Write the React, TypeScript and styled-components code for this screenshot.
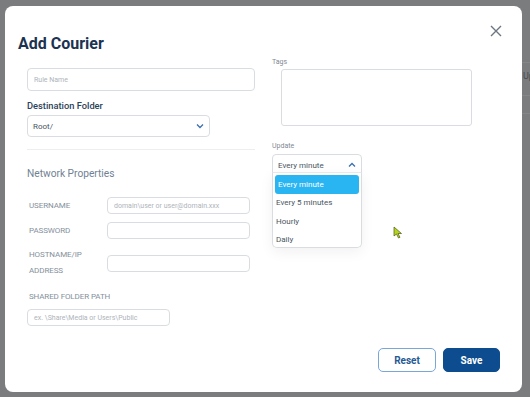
import React from "react";
import styled, { createGlobalStyle } from "styled-components";

const Global = createGlobalStyle`
  html, body { margin: 0; padding: 0; }
  body { font-family: Roboto, "Liberation Sans", sans-serif; }
  * { box-sizing: border-box; }
`;

const Backdrop = styled.div`
  position: relative;
  width: 530px;
  height: 397px;
  background: #7b7c7e;
  padding: 6px 8px 5px 5px;
  overflow: hidden;
`;

const BgText = styled.span`
  position: absolute;
  left: 523px;
  top: 71px;
  font-size: 9px;
  color: #4a4c50;
`;

const BgLine = styled.div<{ $top: number }>`
  position: absolute;
  left: 522px;
  right: 0;
  top: ${(p) => p.$top}px;
  height: 1px;
  background: #858688;
`;

const Modal = styled.div`
  position: relative;
  width: 517px;
  height: 386px;
  background: #fff;
  border-radius: 8px;
  display: flex;
  flex-direction: column;
  padding: 0 22px 20px 13px;
`;

const Header = styled.div`
  display: flex;
  justify-content: space-between;
  align-items: flex-start;
  height: 56px;
`;

const Title = styled.h1`
  margin: 28px 0 0 0;
  font-size: 16px;
  font-weight: 700;
  color: #1b3350;
  line-height: 20px;
`;

const Close = styled.button`
  margin: 18px -3px 0 0;
  width: 14px;
  height: 14px;
  padding: 0;
  border: 0;
  background: none;
  display: flex;
  align-items: center;
  justify-content: center;
`;

const Body = styled.div`
  flex: 1;
  display: grid;
  grid-template-columns: 236px 1fr;
  column-gap: 9px;
  padding-left: 9px;
`;

const Col = styled.div`
  display: flex;
  flex-direction: column;
  align-items: flex-start;
`;

const Input = styled.div<{ $w: number; $h: number; $mt?: number }>`
  width: ${(p) => p.$w}px;
  height: ${(p) => p.$h}px;
  margin-top: ${(p) => p.$mt ?? 0}px;
  border: 1px solid #d9dde1;
  border-radius: 4px;
  display: flex;
  align-items: center;
  padding: 0 6px;
  font-size: 7px;
  color: #aeb4ba;
  white-space: nowrap;
`;

const FieldLabel = styled.div<{ $mt: number }>`
  margin-top: ${(p) => p.$mt}px;
  font-size: 9.3px;
  line-height: 12px;
  font-weight: 500;
  color: #2d4258;
`;

const Select = styled.div<{ $w: number; $mt: number }>`
  width: ${(p) => p.$w}px;
  height: 22px;
  margin-top: ${(p) => p.$mt}px;
  border: 1px solid #d9dde1;
  border-radius: 4px;
  display: flex;
  align-items: center;
  justify-content: space-between;
  padding: 0 5px 0 5px;
  font-size: 8px;
  color: #4a5662;
`;

const Divider = styled.div`
  margin-top: 12px;
  width: 228px;
  height: 1px;
  background: #eceef0;
`;

const Section = styled.div`
  margin-top: 17px;
  font-size: 10.2px;
  line-height: 14px;
  font-weight: 400;
  color: #6f8294;
`;

const Grid = styled.div`
  margin-top: 16px;
  display: grid;
  grid-template-columns: 78px 143px;
  row-gap: 8px;
  align-items: center;
  padding-left: 2px;
`;

const Caps = styled.div<{ $mt?: number }>`
  margin-top: ${(p) => p.$mt ?? 0}px;
  font-size: 8px;
  line-height: 16px;
  text-transform: uppercase;
  color: #85919c;
  letter-spacing: -0.1px;
`;

const SmallLabel = styled.div<{ $mt: number }>`
  margin-top: ${(p) => p.$mt}px;
  font-size: 7px;
  line-height: 9px;
  color: #7f8993;
`;

const Textarea = styled.div`
  margin: 2px 0 0 9px;
  width: 191px;
  height: 57px;
  border: 1px solid #d9dde1;
  border-radius: 3px;
`;

const DropWrap = styled.div`
  position: relative;
`;

const Menu = styled.ul`
  position: absolute;
  left: 0;
  top: 21px;
  width: 90px;
  margin: 0;
  padding: 2px 2px 0 2px;
  list-style: none;
  background: #fff;
  border: 1px solid #d9dde1;
  border-top-color: #e6e8ea;
  border-radius: 0 0 5px 5px;
  box-shadow: 0 4px 14px rgba(0, 0, 0, 0.06);
  height: 76px;
`;

const Item = styled.li<{ $active?: boolean }>`
  height: 18.5px;
  display: flex;
  align-items: center;
  font-size: 8px;
  border-radius: 3px;
  color: ${(p) => (p.$active ? "#fff" : "#4a5662")};
  background: ${(p) => (p.$active ? "#29b4f2" : "transparent")};
  padding-left: ${(p) => (p.$active ? 3 : 1)}px;
`;

const Footer = styled.div`
  display: flex;
  justify-content: flex-end;
  gap: 7px;
`;

const Button = styled.button<{ $primary?: boolean }>`
  width: ${(p) => (p.$primary ? 57 : 58)}px;
  height: 24px;
  border-radius: 5px;
  font-family: Roboto, "Liberation Sans", sans-serif;
  font-size: 10px;
  font-weight: 700;
  border: 1px solid ${(p) => (p.$primary ? "#0d4c8e" : "#7aa6d8")};
  background: ${(p) => (p.$primary ? "#0d4c8e" : "#fff")};
  color: ${(p) => (p.$primary ? "#fff" : "#275a94")};
  padding: 0;
`;

const Cursor = styled.svg`
  position: absolute;
  left: 393px;
  top: 226px;
`;

const Chevron = ({ up }: { up?: boolean }) => (
  <svg width="8" height="6" viewBox="0 0 8 6">
    <path
      d={up ? "M1 4.5 L4 1.5 L7 4.5" : "M1 1.5 L4 4.5 L7 1.5"}
      fill="none"
      stroke="#3d6fae"
      strokeWidth="1.3"
    />
  </svg>
);

export default function App() {
  return (
    <>
      <Global />
      <Backdrop>
        <BgLine $top={62} />
        <BgLine $top={95} />
        <BgLine $top={113} />
        <BgText>Up</BgText>
        <Modal>
          <Header>
            <Title>Add Courier</Title>
            <Close aria-label="close">
              <svg width="12" height="12" viewBox="0 0 12 12">
                <path d="M1 1 L11 11 M11 1 L1 11" stroke="#6b7683" strokeWidth="1.4" />
              </svg>
            </Close>
          </Header>
          <Body>
            <Col>
              <Input $w={228} $h={23} $mt={6}>Rule Name</Input>
              <FieldLabel $mt={9}>Destination Folder</FieldLabel>
              <Select $w={183} $mt={3}>
                <span>Root/</span>
                <Chevron />
              </Select>
              <Divider />
              <Section>Network Properties</Section>
              <Grid>
                <Caps>Username</Caps>
                <Input $w={143} $h={17}>domain\user or user@domain.xxx</Input>
                <Caps>Password</Caps>
                <Input $w={143} $h={17} />
                <Caps>
                  Hostname/IP
                  <br />
                  Address
                </Caps>
                <Input $w={143} $h={17} />
              </Grid>
              <Caps $mt={10}>&nbsp;Shared Folder Path</Caps>
              <Input $w={143} $h={17} $mt={4}>ex. \Share\Media or Users\Public</Input>
            </Col>
            <Col>
              <SmallLabel $mt={-4}>Tags</SmallLabel>
              <Textarea />
              <SmallLabel $mt={16}>Update</SmallLabel>
              <DropWrap>
                <Select $w={90} $mt={3}>
                  <span>Every minute</span>
                  <Chevron up />
                </Select>
                <Menu>
                  <Item $active>Every minute</Item>
                  <Item>Every 5 minutes</Item>
                  <Item>Hourly</Item>
                  <Item>Daily</Item>
                </Menu>
              </DropWrap>
            </Col>
          </Body>
          <Footer>
            <Button>Reset</Button>
            <Button $primary>Save</Button>
          </Footer>
        </Modal>
        <Cursor width="10" height="13" viewBox="0 0 10 13">
          <path d="M1 1 L1 10 L3.5 8 L5.5 12 L7 11.3 L5 7.5 L8.5 7.5 Z" fill="#b5d321" stroke="#4b5a10" strokeWidth="0.7" />
        </Cursor>
      </Backdrop>
    </>
  );
}
